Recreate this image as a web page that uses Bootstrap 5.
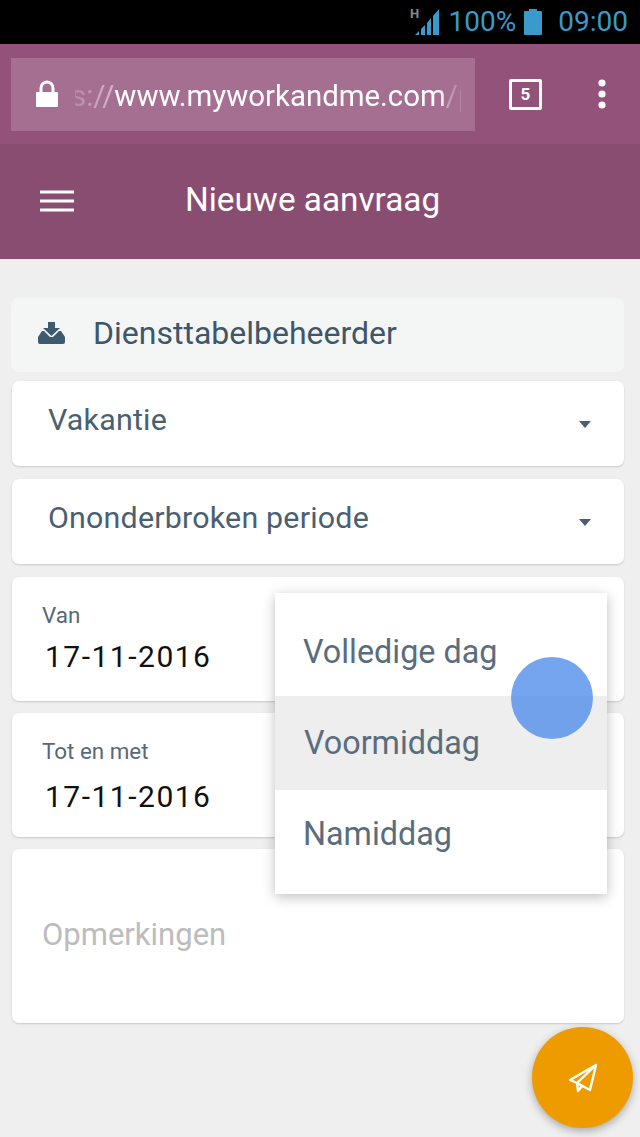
<!DOCTYPE html>
<html lang="nl">

<head>
  <meta charset="UTF-8">
  <title>Nieuwe aanvraag</title>
  <link href="https://cdn.jsdelivr.net/npm/bootstrap@5.3.3/dist/css/bootstrap.min.css" rel="stylesheet">
  <script src="https://cdn.jsdelivr.net/npm/bootstrap@5.3.3/dist/js/bootstrap.bundle.min.js"></script>
  <style>
    html, body {
      height: 1137px;
      overflow: hidden;
    }

    body {
      background-color: #efefef;
      font-family: Roboto, sans-serif;
      color: #4a6070;
    }

    .phone-status {
      height: 44px;
      background-color: #000;
      color: #3a9ac9;
      font-size: 28px;
      padding-right: 12px;
    }

    .browser-bar {
      height: 101px;
      background-color: #925279;
      border-bottom: 1px solid #8a4d72;
      padding-left: 11px;
    }

    .url-box {
      width: 464px;
      height: 73px;
      background-color: #a56f91;
      padding-left: 24px;
      padding-right: 14px;
      font-size: 29.4px;
      color: #fff;
      overflow: hidden;
    }

    .url-text {
      white-space: nowrap;
      overflow: hidden;
      flex: 1;
      margin-left: 16px;
      padding-top: 4px;
      -webkit-mask-image: linear-gradient(90deg, rgba(0, 0, 0, .35), #000 38px, #000 calc(100% - 24px), rgba(0, 0, 0, .3));
      mask-image: linear-gradient(90deg, rgba(0, 0, 0, .35), #000 38px, #000 calc(100% - 24px), rgba(0, 0, 0, .3));
    }

    .url-scroll {
      margin-left: -4px;
    }

    .url-dim {
      color: #d3b9ca;
    }

    .tab-count {
      width: 33px;
      height: 31px;
      border: 3px solid #fff;
      border-radius: 2px;
      color: #fff;
      font-size: 17px;
      font-weight: 700;
      line-height: 1;
      margin-left: 34px;
    }

    .browser-menu {
      margin-left: 55px;
    }

    .app-head {
      height: 115px;
      background-color: #8a4d72;
      border-bottom: 1px solid #f3dfea;
      color: #fff;
      padding-left: 40px;
      padding-bottom: 2px;
    }

    .app-title {
      font-size: 33.3px;
      margin-left: 111px;
      margin-bottom: 2px;
    }

    .form-area {
      padding: 38px 16px 0 11px;
    }

    .role-row {
      height: 74px;
      background-color: #f4f5f5;
      border-radius: 8px;
      padding-left: 26px;
      padding-bottom: 4px;
      font-size: 32px;
      color: #3f5668;
      margin-bottom: 9px;
    }

    .role-row svg {
      margin-right: 27px;
    }

    .white-box {
      background-color: #fff;
      border-radius: 7px;
      box-shadow: 0 1px 2px rgba(0, 0, 0, .16);
      margin-left: 1px;
    }

    .pick-box {
      height: 85px;
      margin-bottom: 13px;
      padding: 0 33px 8px 36px;
      font-size: 30.4px;
      letter-spacing: .2px;
    }

    .caret-down {
      width: 0;
      height: 0;
      border-left: 6px solid transparent;
      border-right: 6px solid transparent;
      border-top: 7px solid #4a6070;
      margin-top: 9px;
    }

    .date-box {
      height: 124px;
      margin-bottom: 12px;
      padding: 23px 30px 0;
    }

    .date-label {
      font-size: 22.4px;
      line-height: 30px;
      color: #56697a;
    }

    .date-value {
      font-size: 30px;
      line-height: 44px;
      color: #111;
      letter-spacing: 1.5px;
      padding-left: 3px;
      margin-top: 5px;
    }

    .date-value.lower {
      margin-top: 9px;
    }

    .note-box {
      height: 174px;
      padding: 66px 30px 0;
      font-size: 31px;
      line-height: 40px;
      color: #bcbcbc;
    }

    .time-menu {
      position: absolute;
      left: 275px;
      top: 593px;
      width: 332px;
      height: 301px;
      background-color: #fff;
      box-shadow: 0 3px 12px rgba(0, 0, 0, .25);
      padding-top: 12px;
      font-size: 32.3px;
      color: #5a6d7d;
    }

    .time-item {
      height: 91px;
      padding: 4px 28px 0;
    }

    .time-item.picked {
      background-color: #eeeeee;
      height: 94px;
      padding: 0 28px 0 29px;
    }

    .time-item.last {
      padding: 0 28px 2px;
    }

    .touch-dot {
      position: absolute;
      left: 511px;
      top: 657px;
      width: 82px;
      height: 82px;
      border-radius: 50%;
      background-color: rgba(80, 140, 235, .78);
    }

    .send-fab {
      position: absolute;
      left: 532px;
      top: 1027px;
      width: 101px;
      height: 101px;
      border-radius: 50%;
      background-color: #ee9b00;
      box-shadow: 0 3px 8px rgba(0, 0, 0, .3);
    }
  </style>
</head>

<body>
  <div class="phone-status d-flex align-items-center justify-content-end">
    <svg width="31" height="30" viewBox="0 0 31 30" class="signal-icon">
      <text x="0" y="11" font-family="Roboto, sans-serif" font-size="13" font-weight="700" fill="#888">H</text>
      <path d="M5 28l4-4v4zM11 28v-6l4-4v10zM17 28V16l4-5v17zM23 28V9l6-7v26z" fill="#3a9ac9" />
    </svg>
    <span class="ms-2">100%</span>
    <svg width="18" height="26" viewBox="0 0 18 26" class="mx-2">
      <path d="M5 0h8v2h4a1 1 0 0 1 1 1v22a1 1 0 0 1-1 1H1a1 1 0 0 1-1-1V3a1 1 0 0 1 1-1h4z" fill="#3a9ac9" />
    </svg>
    <span class="ms-2">09:00</span>
  </div>

  <div class="browser-bar d-flex align-items-center">
    <div class="url-box d-flex align-items-center">
      <svg width="24" height="28" viewBox="0 0 24 28">
        <path d="M2 12h20a1 1 0 0 1 1 1v13a1 1 0 0 1-1 1H2a1 1 0 0 1-1-1V13a1 1 0 0 1 1-1z" fill="#fff" />
        <path d="M6 12V8a6 6 0 0 1 12 0v4" fill="none" stroke="#fff" stroke-width="3" />
      </svg>
      <div class="url-text"><div class="url-scroll"><span class="url-dim">s://</span>www.myworkandme.com<span class="url-dim">/p</span></div></div>
    </div>
    <div class="tab-count d-flex align-items-center justify-content-center">5</div>
    <svg class="browser-menu" width="10" height="30" viewBox="0 0 10 30">
      <circle cx="5" cy="4" r="3.6" fill="#fff" />
      <circle cx="5" cy="15" r="3.6" fill="#fff" />
      <circle cx="5" cy="26" r="3.6" fill="#fff" />
    </svg>
  </div>

  <div class="app-head d-flex align-items-center">
    <svg width="34" height="22" viewBox="0 0 34 22">
      <path d="M0 2h34M0 11h34M0 20h34" stroke="#fff" stroke-width="2.8" />
    </svg>
    <div class="app-title">Nieuwe aanvraag</div>
  </div>

  <div class="form-area">
    <div class="role-row d-flex align-items-center">
      <svg width="29" height="22" viewBox="0 0 29 22">
        <path d="M11 0h7v6h5l-8.500 8L6 6h5z" fill="#3f5a6e" />
        <path d="M5 9h2l6 6h3l6-6h2l4 6v5a2 2 0 0 1-2 2H3a2 2 0 0 1-2-2v-5z" fill="#3f5a6e" />
      </svg>
      <span>Diensttabelbeheerder</span>
    </div>

    <div class="white-box pick-box d-flex align-items-center justify-content-between">
      <span>Vakantie</span><span class="caret-down"></span>
    </div>
    <div class="white-box pick-box d-flex align-items-center justify-content-between">
      <span>Ononderbroken periode</span><span class="caret-down"></span>
    </div>

    <div class="white-box date-box">
      <div class="date-label">Van</div>
      <div class="date-value">17-11-2016</div>
    </div>
    <div class="white-box date-box">
      <div class="date-label">Tot en met</div>
      <div class="date-value lower">17-11-2016</div>
    </div>

    <div class="white-box note-box">Opmerkingen</div>
  </div>

  <div class="time-menu">
    <div class="time-item d-flex align-items-center">Volledige dag</div>
    <div class="time-item picked d-flex align-items-center">Voormiddag</div>
    <div class="time-item last d-flex align-items-center">Namiddag</div>
  </div>
  <div class="touch-dot"></div>

  <div class="send-fab d-flex align-items-center justify-content-center">
    <svg width="30" height="30" viewBox="0 0 30 30">
      <path d="M28 2 L2 17 L9 20 L22 27 Z M28 2 L9 20 L10 28 L14 23" fill="none" stroke="#fff" stroke-width="2.4" stroke-linejoin="round" />
    </svg>
  </div>
</body>

</html>
